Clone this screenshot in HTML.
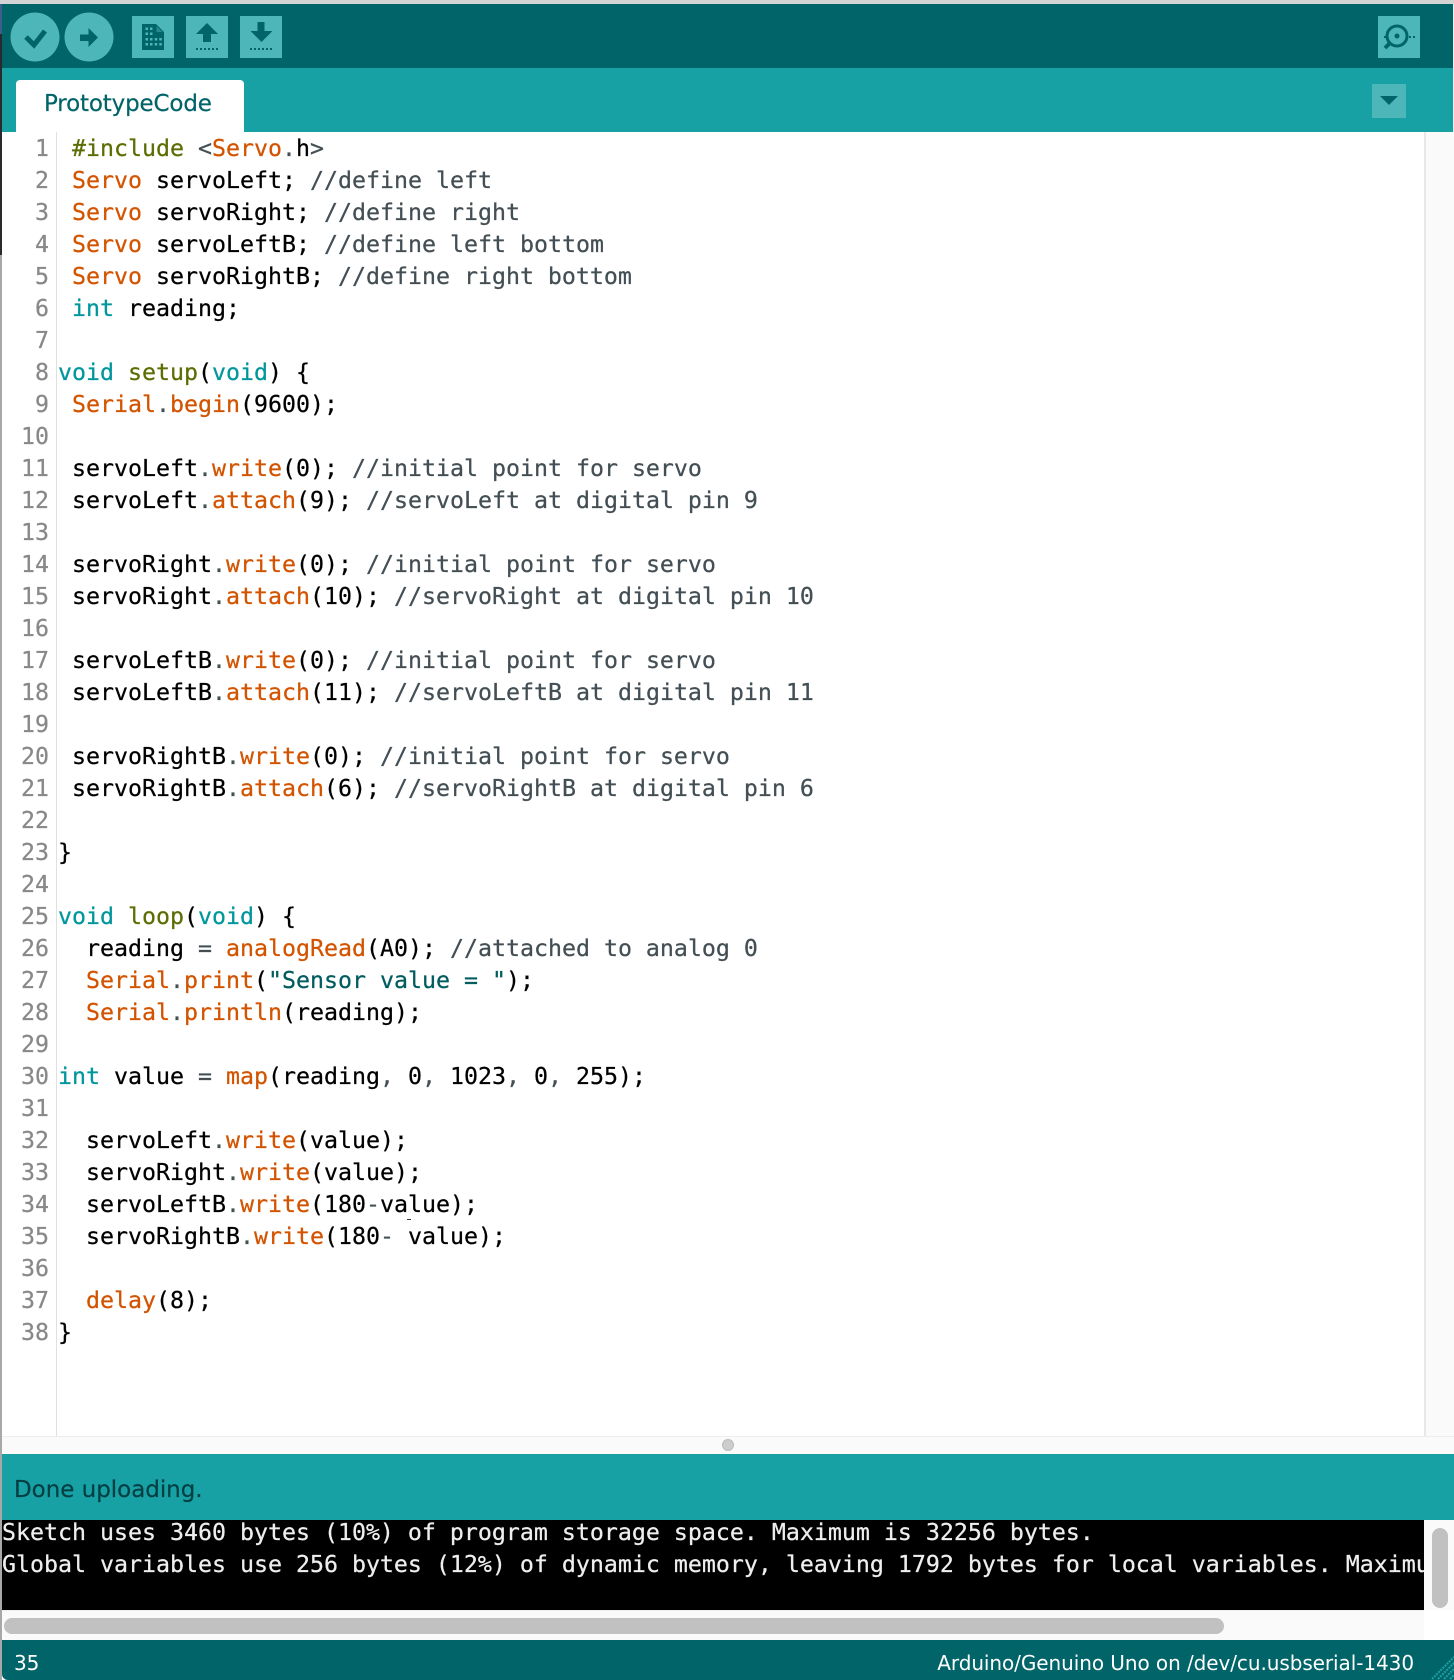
<!DOCTYPE html>
<html><head><meta charset="utf-8"><style>
html,body{margin:0;padding:0;background:#fff}
body{width:1454px;height:1680px;position:relative;overflow:hidden;font-family:"DejaVu Sans Mono","Liberation Mono",monospace}
.a{position:absolute}
.l{position:absolute;left:0;margin-top:1px;height:32px;line-height:32px;font-size:23.26px;white-space:pre;color:#000;-webkit-text-stroke:.25px currentColor}
.n{position:absolute;left:0;margin-top:1px;width:49px;text-align:right;height:32px;line-height:32px;font-size:23.26px;color:#888;-webkit-text-stroke:.25px currentColor}
.o{color:#D35400}.t{color:#00979C}.g{color:#5E6D03}.c{color:#434F54}.s{color:#005C5F}
.u{position:absolute;font-family:"DejaVu Sans","Liberation Sans",sans-serif;white-space:pre}
</style></head><body>
<div class="a" style="left:0;top:0;width:1454px;height:4px;background:#d4d4d4"></div>
<div class="a" style="left:2px;top:4px;width:1452px;height:64px;background:#006468"></div>
<div class="a" style="left:2px;top:68px;width:1452px;height:64px;background:#17A1A5"></div>
<div class="a" style="left:0;top:4px;width:2px;height:30px;background:#3a5f8a"></div>
<div class="a" style="left:0;top:34px;width:2px;height:221px;background:#2a2a2e"></div>
<div class="a" style="left:0;top:255px;width:2px;height:1425px;background:#a8a8a8"></div>
<div class="a" style="left:1453px;top:4px;width:1px;height:1676px;background:#eee"></div>

<svg class="a" style="left:0;top:0" width="300" height="68" viewBox="0 0 300 68">
<circle cx="35" cy="37" r="24.5" fill="#4DB6B9"/>
<circle cx="89" cy="37" r="24.5" fill="#4DB6B9"/>
<path d="M26 37l8 8 11-14" fill="none" stroke="#006468" stroke-width="5"/>
<path d="M80 34.500h8.500v-6.500l9.500 9.500-9.500 9.500v-6h-8.500z" fill="#006468"/>
<rect x="132" y="16" width="42" height="42" fill="#4DB6B9"/>
<rect x="186" y="16" width="42" height="42" fill="#4DB6B9"/>
<rect x="240" y="16" width="42" height="42" fill="#4DB6B9"/>
<path d="M142 24h14l8 8v18h-22z" fill="#006468"/>
<path d="M156.500 26v6h6z" fill="#2a8a8d"/>
<g fill="#4DB6B9"><rect x="145.500" y="27.500" width="2.500" height="2.500"/><rect x="150" y="27.500" width="2.500" height="2.500"/><rect x="145.500" y="32.500" width="2.500" height="2.500"/><rect x="150" y="32.500" width="2.500" height="2.500"/><rect x="145.500" y="38" width="2.500" height="2.500"/><rect x="150" y="38" width="2.500" height="2.500"/><rect x="154.700" y="38" width="2.500" height="2.500"/><rect x="159.300" y="38" width="2.500" height="2.500"/><rect x="145.500" y="43" width="2.500" height="2.500"/><rect x="150" y="43" width="2.500" height="2.500"/><rect x="154.700" y="43" width="2.500" height="2.500"/><rect x="159.300" y="43" width="2.500" height="2.500"/></g>
<path d="M207 23l11 11h-7v8h-8v-8h-7z" fill="#006468"/>
<path d="M257.500 22h7v9h8l-11 11-11-11h7z" fill="#006468"/>
<g fill="#006468"><rect x="196" y="48" width="2" height="2"/><rect x="200" y="48" width="2" height="2"/><rect x="204" y="48" width="2" height="2"/><rect x="208" y="48" width="2" height="2"/><rect x="212" y="48" width="2" height="2"/><rect x="216" y="48" width="2" height="2"/><rect x="250" y="48" width="2" height="2"/><rect x="254" y="48" width="2" height="2"/><rect x="258" y="48" width="2" height="2"/><rect x="262" y="48" width="2" height="2"/><rect x="266" y="48" width="2" height="2"/><rect x="270" y="48" width="2" height="2"/></g>
</svg>
<svg class="a" style="left:1372px;top:16px" width="50" height="104" viewBox="1372 16 50 104">
<rect x="1378" y="16" width="42" height="42" fill="#4DB6B9"/>
<circle cx="1397" cy="36" r="10" fill="none" stroke="#006468" stroke-width="3"/>
<circle cx="1397" cy="36" r="2.500" fill="#006468"/>
<path d="M1390 43l-5 5" stroke="#006468" stroke-width="4" fill="none"/>
<rect x="1409" y="36" width="2" height="2" fill="#006468"/><rect x="1413" y="36" width="2" height="2" fill="#006468"/><rect x="1384" y="36" width="2" height="2" fill="#006468"/>
<rect x="1372" y="84" width="34" height="34" fill="#4DB6B9"/>
<path d="M1380 96h18l-9 9z" fill="#006468"/>
</svg>

<div class="a" style="left:16px;top:80px;width:228px;height:52px;background:#fff;border-radius:4px 4px 0 0"></div>
<div class="u" style="left:44px;top:87px;height:34px;line-height:34px;font-size:23px;letter-spacing:-.16px;color:#006468;-webkit-text-stroke:.2px currentColor">PrototypeCode</div>

<div class="a" style="left:56px;top:132px;width:1px;height:1304px;background:#e0e0e0"></div>
<div class="a" style="left:1424px;top:132px;width:30px;height:1304px;background:#fafafa;border-left:2px solid #e8e8e8;box-sizing:border-box"></div>

<div class="n" style="top:132px">1</div><div class="l" style="left:58px;top:132px"> <span class="g">#include</span> <span class="c">&lt;</span><span class="o">Servo</span><span class="c">.</span>h<span class="c">&gt;</span></div>
<div class="n" style="top:164px">2</div><div class="l" style="left:58px;top:164px"> <span class="o">Servo</span> servoLeft; <span class="c">//define left</span></div>
<div class="n" style="top:196px">3</div><div class="l" style="left:58px;top:196px"> <span class="o">Servo</span> servoRight; <span class="c">//define right</span></div>
<div class="n" style="top:228px">4</div><div class="l" style="left:58px;top:228px"> <span class="o">Servo</span> servoLeftB; <span class="c">//define left bottom</span></div>
<div class="n" style="top:260px">5</div><div class="l" style="left:58px;top:260px"> <span class="o">Servo</span> servoRightB; <span class="c">//define right bottom</span></div>
<div class="n" style="top:292px">6</div><div class="l" style="left:58px;top:292px"> <span class="t">int</span> reading;</div>
<div class="n" style="top:324px">7</div>
<div class="n" style="top:356px">8</div><div class="l" style="left:58px;top:356px"><span class="t">void</span> <span class="g">setup</span>(<span class="t">void</span>) {</div>
<div class="n" style="top:388px">9</div><div class="l" style="left:58px;top:388px"> <span class="o">Serial</span><span class="c">.</span><span class="o">begin</span>(9600);</div>
<div class="n" style="top:420px">10</div>
<div class="n" style="top:452px">11</div><div class="l" style="left:58px;top:452px"> servoLeft<span class="c">.</span><span class="o">write</span>(0); <span class="c">//initial point for servo</span></div>
<div class="n" style="top:484px">12</div><div class="l" style="left:58px;top:484px"> servoLeft<span class="c">.</span><span class="o">attach</span>(9); <span class="c">//servoLeft at digital pin 9</span></div>
<div class="n" style="top:516px">13</div>
<div class="n" style="top:548px">14</div><div class="l" style="left:58px;top:548px"> servoRight<span class="c">.</span><span class="o">write</span>(0); <span class="c">//initial point for servo</span></div>
<div class="n" style="top:580px">15</div><div class="l" style="left:58px;top:580px"> servoRight<span class="c">.</span><span class="o">attach</span>(10); <span class="c">//servoRight at digital pin 10</span></div>
<div class="n" style="top:612px">16</div>
<div class="n" style="top:644px">17</div><div class="l" style="left:58px;top:644px"> servoLeftB<span class="c">.</span><span class="o">write</span>(0); <span class="c">//initial point for servo</span></div>
<div class="n" style="top:676px">18</div><div class="l" style="left:58px;top:676px"> servoLeftB<span class="c">.</span><span class="o">attach</span>(11); <span class="c">//servoLeftB at digital pin 11</span></div>
<div class="n" style="top:708px">19</div>
<div class="n" style="top:740px">20</div><div class="l" style="left:58px;top:740px"> servoRightB<span class="c">.</span><span class="o">write</span>(0); <span class="c">//initial point for servo</span></div>
<div class="n" style="top:772px">21</div><div class="l" style="left:58px;top:772px"> servoRightB<span class="c">.</span><span class="o">attach</span>(6); <span class="c">//servoRightB at digital pin 6</span></div>
<div class="n" style="top:804px">22</div>
<div class="n" style="top:836px">23</div><div class="l" style="left:58px;top:836px">}</div>
<div class="n" style="top:868px">24</div>
<div class="n" style="top:900px">25</div><div class="l" style="left:58px;top:900px"><span class="t">void</span> <span class="g">loop</span>(<span class="t">void</span>) {</div>
<div class="n" style="top:932px">26</div><div class="l" style="left:58px;top:932px">  reading <span class="c">=</span> <span class="o">analogRead</span>(A0); <span class="c">//attached to analog 0</span></div>
<div class="n" style="top:964px">27</div><div class="l" style="left:58px;top:964px">  <span class="o">Serial</span><span class="c">.</span><span class="o">print</span>(<span class="s">"Sensor value = "</span>);</div>
<div class="n" style="top:996px">28</div><div class="l" style="left:58px;top:996px">  <span class="o">Serial</span><span class="c">.</span><span class="o">println</span>(reading);</div>
<div class="n" style="top:1028px">29</div>
<div class="n" style="top:1060px">30</div><div class="l" style="left:58px;top:1060px"><span class="t">int</span> value <span class="c">=</span> <span class="o">map</span>(reading<span class="c">,</span> 0<span class="c">,</span> 1023<span class="c">,</span> 0<span class="c">,</span> 255);</div>
<div class="n" style="top:1092px">31</div>
<div class="n" style="top:1124px">32</div><div class="l" style="left:58px;top:1124px">  servoLeft<span class="c">.</span><span class="o">write</span>(value);</div>
<div class="n" style="top:1156px">33</div><div class="l" style="left:58px;top:1156px">  servoRight<span class="c">.</span><span class="o">write</span>(value);</div>
<div class="n" style="top:1188px">34</div><div class="l" style="left:58px;top:1188px">  servoLeftB<span class="c">.</span><span class="o">write</span>(180<span class="c">-</span>value);</div>
<div class="n" style="top:1220px">35</div><div class="l" style="left:58px;top:1220px">  servoRightB<span class="c">.</span><span class="o">write</span>(180<span class="c">-</span> value);</div>
<div class="n" style="top:1252px">36</div>
<div class="n" style="top:1284px">37</div><div class="l" style="left:58px;top:1284px">  <span class="o">delay</span>(8);</div>
<div class="n" style="top:1316px">38</div><div class="l" style="left:58px;top:1316px">}</div>
<div class="a" style="left:407px;top:1219px;width:4px;height:1px;background:#333"></div>

<div class="a" style="left:2px;top:1436px;width:1452px;height:18px;background:#fafafa;border-top:1px solid #eee;box-sizing:border-box"></div>
<div class="a" style="left:722px;top:1439px;width:12px;height:12px;border-radius:50%;background:#ccc;border:1px solid #bbb;box-sizing:border-box"></div>
<div class="a" style="left:2px;top:1454px;width:1452px;height:66px;background:#17A1A5"></div>
<div class="u" style="left:14px;top:1472px;height:36px;line-height:36px;font-size:23px;letter-spacing:-.03px;color:#003E42;-webkit-text-stroke:.2px currentColor">Done uploading.</div>

<div class="a" style="left:2px;top:1520px;width:1422px;height:90px;background:#000;overflow:hidden">
<div class="l" style="left:0;top:-4px;color:#eee">Sketch uses 3460 bytes (10%) of program storage space. Maximum is 32256 bytes.</div>
<div class="l" style="left:0;top:28px;color:#eee">Global variables use 256 bytes (12%) of dynamic memory, leaving 1792 bytes for local variables. Maximum is 2048 bytes.</div>
</div>
<div class="a" style="left:1424px;top:1520px;width:30px;height:90px;background:#fafafa"></div>
<div class="a" style="left:1432px;top:1528px;width:16px;height:80px;background:#c1c1c1;border-radius:8px"></div>
<div class="a" style="left:2px;top:1610px;width:1422px;height:30px;background:#fafafa;border-top:1px solid #eee;box-sizing:border-box"></div>
<div class="a" style="left:1424px;top:1610px;width:30px;height:30px;background:#fff"></div>
<div class="a" style="left:4px;top:1618px;width:1220px;height:16px;background:#c1c1c1;border-radius:8px"></div>

<div class="a" style="left:2px;top:1640px;width:1452px;height:40px;background:#006468;border-radius:0 0 0 6px"></div>
<div class="u" style="left:14px;top:1646px;height:34px;line-height:34px;font-size:20px;letter-spacing:-.07px;color:#fff">35</div>
<div class="u" style="right:40px;top:1646px;height:34px;line-height:34px;font-size:20px;letter-spacing:-.07px;color:#fff">Arduino/Genuino Uno on /dev/cu.usbserial-1430</div>
<svg class="a" style="left:1430px;top:1654px" width="24" height="26" viewBox="0 0 24 26"><path d="M2 25L24 3M8 25L24 9M14 25L24 15M20 25L24 21" stroke="#17A1A5" stroke-width="2" stroke-dasharray="2 1"/></svg>
</body></html>
